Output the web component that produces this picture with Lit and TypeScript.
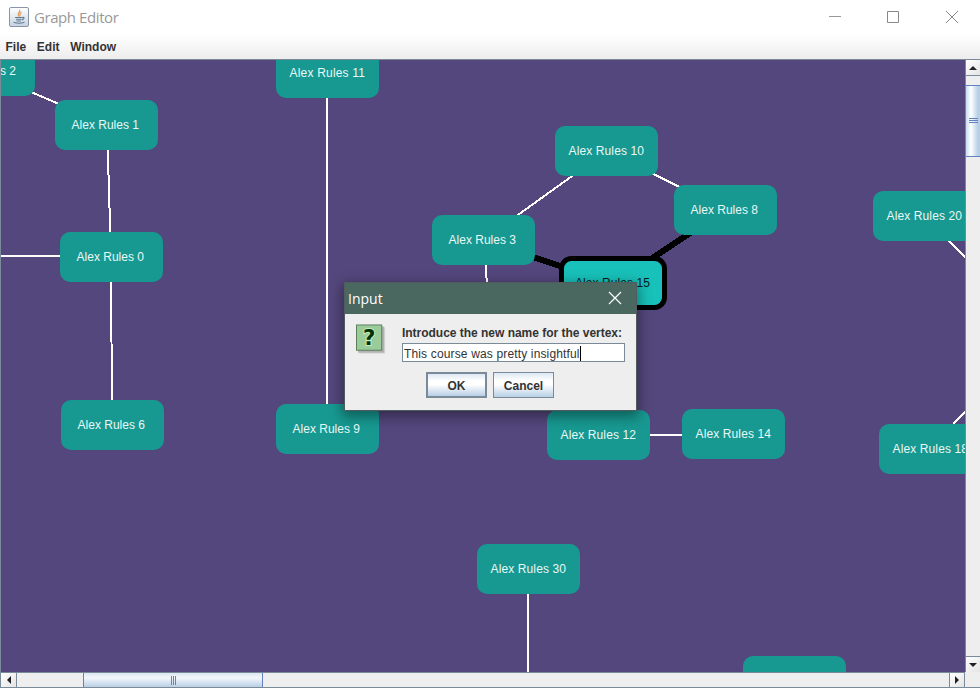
import { LitElement, html, svg, css } from "lit";
import { customElement } from "lit/decorators.js";

interface Vertex { n: string; x: number; y: number; label: string }

const v = (n: string, x: number, y: number, label = `Alex Rules ${n}`): Vertex => ({ n, x, y, label });

const vertices: Vertex[] = [
  v("2", -68, 46), v("1", 55, 100), v("0", 60, 232), v("6", 61, 400),
  v("11", 276, 48), v("9", 276, 404), v("10", 555, 126), v("8", 674, 185),
  v("3", 432, 215), v("12", 547, 410), v("14", 682, 409), v("20", 873, 191),
  v("18", 879, 424), v("30", 477, 544), v("", 743, 656, ""),
];

const edges = [
  [-17, 71, 107, 125], [107, 125, 111, 257], [111, 257, 112, 425], [-60, 256, 111, 256],
  [327, 73, 327, 429], [483, 240, 607, 151], [607, 151, 726, 210], [484, 240, 488, 300],
  [598, 435, 733, 435], [925, 216, 985, 278], [930, 449, 990, 385], [528, 569, 528, 720],
];

const boldEdges = [[483, 240, 613, 284], [613, 284, 725, 210]];

@customElement("graph-canvas")
export class GraphCanvas extends LitElement {
  static styles = css`
    :host { display: block; overflow: hidden; background: #54477d; }
    svg { display: block; }
    text { font: 12px "Liberation Sans", Arial, sans-serif; fill: #e9f8f6; }
    .node { fill: #179991; }
    .edge { stroke: #fff; stroke-width: 2; shape-rendering: crispEdges; }
    .bold { stroke: #000; stroke-width: 6; shape-rendering: crispEdges; }
    .selected { fill: #18c1b9; stroke: #000; stroke-width: 5; }
    .dark { fill: #031c1b; }
  `;
  render() {
    return html`<svg width="964" height="612" viewBox="1 60 964 612">
      ${edges.map(([a, b, c, d]) => svg`<line class="edge" x1=${a} y1=${b} x2=${c} y2=${d} />`)}
      ${boldEdges.map(([a, b, c, d]) => svg`<line class="bold" x1=${a} y1=${b} x2=${c} y2=${d} />`)}
      ${vertices.map((p) => {
        const two = p.n.length > 1;
        return svg`<rect class="node" x=${p.x} y=${p.y} width="103" height="50" rx="10" />
          ${p.label ? svg`<text x=${p.x + (two ? 13.5 : 16.5)} y=${p.y + 29} textLength=${two ? 75.5 : 67.5}>${p.label}</text>` : null}`;
      })}
      <rect class="selected" x="561.5" y="258.5" width="103" height="49" rx="10" />
      <text class="dark" x="575" y="287" textLength="75">Alex Rules 15</text>
    </svg>`;
  }
}

@customElement("input-dialog")
export class InputDialog extends LitElement {
  static styles = css`
    :host { display: flex; flex-direction: column; width: 291px; height: 127px; background: #eee;
      outline: 1px solid #4f5b5d; box-shadow: 0 4px 12px 3px rgba(0,0,0,.38);
      font: 12px "Liberation Sans", Arial, sans-serif; color: #333; }
    header { display: flex; justify-content: space-between; height: 31px; background: #4a6860; color: #fff;
      font: 14px/31px "Open Sans", sans-serif; padding: 0 14px 0 3px; align-items: center; }
    header svg { margin-bottom: 1px; }
    .body { display: flex; padding: 10px 11px 0; }
    .icon { width: 34px; height: 34px; margin-right: 12px; }
    .form { flex: 1; }
    .label { display: block; font-weight: bold; line-height: 16px; white-space: nowrap; height: 19px; padding: 1px 0 0 1px; box-sizing: border-box; letter-spacing: -.02px; }
    .field { height: 19px; border: 1px solid #7a8a99; background: #fff; box-sizing: border-box; width: 223px; margin-left: 1px;
      display: flex; align-items: center; padding: 2px 0 0 1px; white-space: nowrap; letter-spacing: .15px; }
    .caret { width: 1px; height: 15px; background: #000; }
    .buttons { display: flex; justify-content: center; gap: 6px; padding: 10px 2px 0 0; }
    .btn { box-sizing: border-box; width: 61px; height: 26px; border: 1px solid #7a8a99; font-weight: bold;
      display: flex; align-items: center; justify-content: center; padding: 2px 0 0 1px;
      background: linear-gradient(#dde8f3, #fff 32%, #fff 48%, #b8cfe5); }
    .default { border-width: 2px; }
  `;
  render() {
    return html`<header><span>Input</span>
        <svg width="14" height="14" viewBox="0 0 14 14"><path d="M1 1L13 13M13 1L1 13" stroke="#fff" stroke-width="1.2" /></svg>
      </header>
      <div class="body">
        <svg class="icon" viewBox="0 0 34 34">
          <path d="M3 3H30V30H3Z" fill="#aaa" opacity=".35" /><path d="M2 2H29V29H2Z" fill="#999" opacity=".6" />
          <rect x=".5" y=".5" width="26" height="26" fill="#99cc99" stroke="#5b7c5b" />
          <text x="13.5" y="21.5" text-anchor="middle" font-family="DejaVu Sans, sans-serif" font-size="22" font-weight="bold" fill="#030" stroke="#c5eac5" stroke-width="2" paint-order="stroke">?</text>
        </svg>
        <div class="form">
          <span class="label">Introduce the new name for the vertex:</span>
          <div class="field"><span>This course was pretty insightful</span><span class="caret"></span></div>
        </div>
      </div>
      <div class="buttons"><div class="btn default">OK</div><div class="btn">Cancel</div></div>`;
  }
}

@customElement("app-root")
export class AppRoot extends LitElement {
  static styles = css`
    :host { display: flex; flex-direction: column; position: relative; width: 980px; height: 688px; overflow: hidden;
      background: #eee; font: bold 12px "Liberation Sans", Arial, sans-serif; color: #333; }
    .title { height: 34px; flex: none; display: flex; align-items: center; background: #fff; padding: 0 21px 0 9px; gap: 5px; }
    .name { flex: 1; font: 15px/34px "Open Sans", sans-serif; letter-spacing: -.42px; color: #999; }
    .controls { display: flex; gap: 45px; }
    .menu { height: 26px; flex: none; display: flex; gap: 10.7px; padding-left: 5.5px; line-height: 26px;
      background: linear-gradient(#fff, #ededed); border-bottom: 1px solid #7a8a99; box-sizing: border-box; }
    .main { flex: 1; display: grid; grid-template-columns: 964px 15px; grid-template-rows: 612px 16px; padding-left: 1px; background: #7a8a99; }
    .v, .h { display: flex; background: #eee; box-sizing: border-box; }
    .v { flex-direction: column; border-left: 1px solid #7a8a99; }
    .h { border: solid #7a8a99; border-width: 1px 0; }
    .arrow { background: linear-gradient(135deg, #fff, #e4e4e4); box-sizing: border-box; display: flex; align-items: center; justify-content: center; flex: none; }
    .v .arrow { height: 16px; }
    .h .arrow { width: 16px; }
    .up { border-bottom: 1px solid #7a8a99; }
    .down { border-top: 1px solid #7a8a99; }
    .left { border-right: 1px solid #7a8a99; }
    .right { border: solid #7a8a99; border-width: 0 1px; }
    .v .gap { height: 9px; }
    .h .gap { width: 66px; }
    .fill { flex: 1; }
    .thumb { box-sizing: border-box; flex: none; display: flex; align-items: center; justify-content: center; }
    .v .thumb { height: 72px; border: solid #6382bf; border-width: 1px 0; background: linear-gradient(90deg, #c8ddf2, #fff 35%, #b8cfe5 85%); }
    .h .thumb { width: 180px; border: solid #6382bf; border-width: 0 1px; background: linear-gradient(#dbe7f3, #f3f7fb 35%, #b8cfe5); }
    .corner { background: #eee; border-bottom: 1px solid #7a8a99; box-sizing: border-box; }
    input-dialog { position: absolute; left: 345px; top: 283px; }
  `;
  render() {
    return html`
      <div class="title">
        <svg width="20" height="20" viewBox="0 0 20 20">
          <defs><linearGradient id="g" x2="0" y2="1"><stop stop-color="#fff" /><stop offset="1" stop-color="#c6d3e0" /></linearGradient></defs>
          <rect x=".5" y=".5" width="19" height="19" rx="1.5" fill="url(#g)" stroke="#8796a8" />
          <path d="M10.5 3C12 5 7.5 6 9.5 9.5M12.5 5.2C9.5 6.5 12 7.5 10.5 9.5" fill="none" stroke="#e39b5b" stroke-width="1.3" />
          <path d="M6 10.5H13.5M7 12.3H12.5M7.5 14H12M13.5 10.5Q16 10 14.5 12L12.8 13M4.5 15.3Q10 17.2 15.5 15.3" fill="none" stroke="#607b94" stroke-width="1.1" />
        </svg>
        <span class="name">Graph Editor</span>
        <div class="controls">
          <svg width="14" height="14"><path d="M2 6.5H14" stroke="#999" /></svg>
          <svg width="14" height="14"><path d="M1.5 1.5H12.5V12.5H1.5Z" fill="none" stroke="#888" /></svg>
          <svg width="14" height="14"><path d="M1 1L13 13M13 1L1 13" stroke="#888" /></svg>
        </div>
      </div>
      <div class="menu"><span>File</span><span>Edit</span><span>Window</span></div>
      <div class="main">
        <graph-canvas></graph-canvas>
        <div class="v">
          <div class="arrow up"><svg width="8" height="4"><path d="M0 4L4 0L8 4Z" fill="#222" /></svg></div>
          <div class="gap"></div>
          <div class="thumb"><svg width="9" height="6"><path d="M0 .5H9M0 2.5H9M0 4.5H9" stroke="#6382bf" /></svg></div>
          <div class="fill"></div>
          <div class="arrow down"><svg width="8" height="4"><path d="M0 0L4 4L8 0Z" fill="#222" /></svg></div>
        </div>
        <div class="h">
          <div class="arrow left"><svg width="4" height="8"><path d="M4 0L0 4L4 8Z" fill="#222" /></svg></div>
          <div class="gap"></div>
          <div class="thumb"><svg width="6" height="9"><path d="M1.5 0V9M3.5 0V9M5.5 0V9" stroke="#6382bf" /></svg></div>
          <div class="fill"></div>
          <div class="arrow right"><svg width="4" height="8"><path d="M0 0L4 4L0 8Z" fill="#222" /></svg></div>
        </div>
        <div class="corner"></div>
      </div>
      <input-dialog></input-dialog>`;
  }
}
